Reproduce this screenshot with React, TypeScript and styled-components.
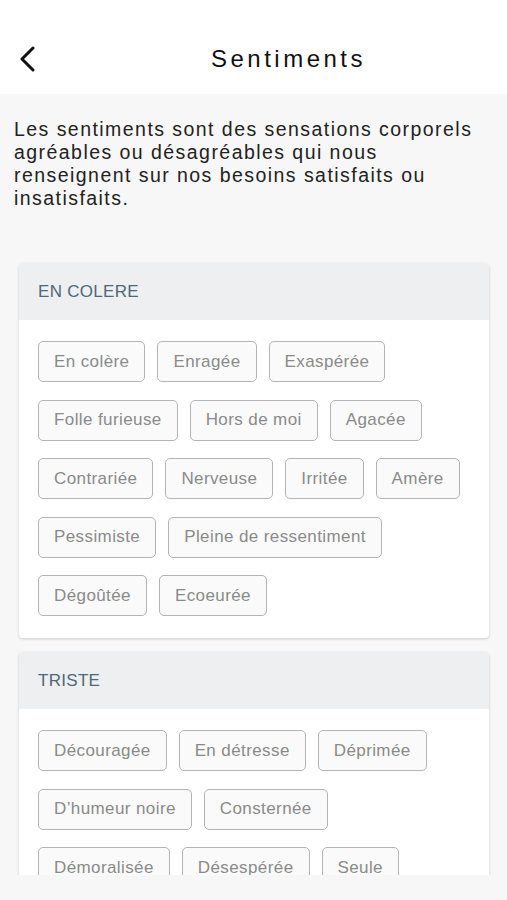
import React from "react";
import styled, { createGlobalStyle } from "styled-components";

const GlobalStyle = createGlobalStyle`
  html, body {
    margin: 0;
    padding: 0;
    background: #f7f7f7;
    font-family: "Liberation Sans", Arial, sans-serif;
  }
`;

type Group = { title: string; items: string[] };

const groups: Group[] = [
  {
    title: "EN COLERE",
    items: [
      "En colère",
      "Enragée",
      "Exaspérée",
      "Folle furieuse",
      "Hors de moi",
      "Agacée",
      "Contrariée",
      "Nerveuse",
      "Irritée",
      "Amère",
      "Pessimiste",
      "Pleine de ressentiment",
      "Dégoûtée",
      "Ecoeurée",
    ],
  },
  {
    title: "TRISTE",
    items: [
      "Découragée",
      "En détresse",
      "Déprimée",
      "D’humeur noire",
      "Consternée",
      "Démoralisée",
      "Désespérée",
      "Seule",
      "Malheureuse",
      "Mélancolique",
    ],
  },
];

const App = () => {
  return (
    <Screen>
      <GlobalStyle />
      <Header>
        <BackButton aria-label="Retour">
          <svg width="18" height="26" viewBox="0 0 18 26" fill="none">
            <path
              d="M14 2 L3 13 L14 24"
              stroke="#111"
              strokeWidth="3"
              strokeLinecap="round"
              strokeLinejoin="round"
            />
          </svg>
        </BackButton>
        <Title>Sentiments</Title>
      </Header>
      <Scroll>
        <Intro>
          Les sentiments sont des sensations corporels agréables ou
          désagréables qui nous renseignent sur nos besoins satisfaits ou
          insatisfaits.
        </Intro>
        {groups.map((g) => (
          <Card key={g.title}>
            <CardHead>{g.title}</CardHead>
            <ChipList>
              {g.items.map((it) => (
                <Chip key={it}>{it}</Chip>
              ))}
            </ChipList>
          </Card>
        ))}
      </Scroll>
      <Footer />
    </Screen>
  );
};

const Screen = styled.div`
  width: 507px;
  height: 900px;
  display: flex;
  flex-direction: column;
  overflow: hidden;
  background: #f7f7f7;
`;

const Header = styled.header`
  height: 94px;
  flex-shrink: 0;
  background: #ffffff;
  display: flex;
  align-items: center;
  padding-top: 24px;
  box-sizing: border-box;
`;

const BackButton = styled.button`
  width: 70px;
  height: 28px;
  flex-shrink: 0;
  border: none;
  background: none;
  padding: 0 0 0 19px;
  display: flex;
  align-items: center;
  justify-content: flex-start;
`;

const Title = styled.h1`
  flex: 1;
  margin: 0;
  text-align: center;
  font-size: 24px;
  font-weight: 500;
  letter-spacing: 3.5px;
  color: #111;
`;

const Scroll = styled.main`
  flex: 1;
  overflow: hidden;
  padding: 24px 18px 0 14px;
`;

const Intro = styled.p`
  margin: 0 0 53px;
  font-size: 19.5px;
  line-height: 23px;
  letter-spacing: 1.45px;
  color: #222;
`;

const Card = styled.section`
  margin: 0 0 14px 5px;
  background: #ffffff;
  border-radius: 4px;
  box-shadow: 0 1px 3px rgba(0, 0, 0, 0.18);
  overflow: hidden;
`;

const CardHead = styled.div`
  height: 57px;
  display: flex;
  align-items: center;
  padding: 0 19px;
  background: #edeff0;
  color: #4f6877;
  font-size: 17px;
  letter-spacing: 0.3px;
`;

const ChipList = styled.div`
  display: flex;
  flex-wrap: wrap;
  gap: 17.5px 12px;
  padding: 21px 19px 22px;
`;

const Chip = styled.span`
  height: 41px;
  box-sizing: border-box;
  display: inline-flex;
  align-items: center;
  padding: 0 15px;
  border: 1.5px solid #b4b4b4;
  border-radius: 5px;
  background: #fafafa;
  color: #8a8a8a;
  font-size: 17px;
  letter-spacing: 0.4px;
`;

const Footer = styled.div`
  height: 25px;
  flex-shrink: 0;
  background: #f7f7f7;
`;

export default App;
